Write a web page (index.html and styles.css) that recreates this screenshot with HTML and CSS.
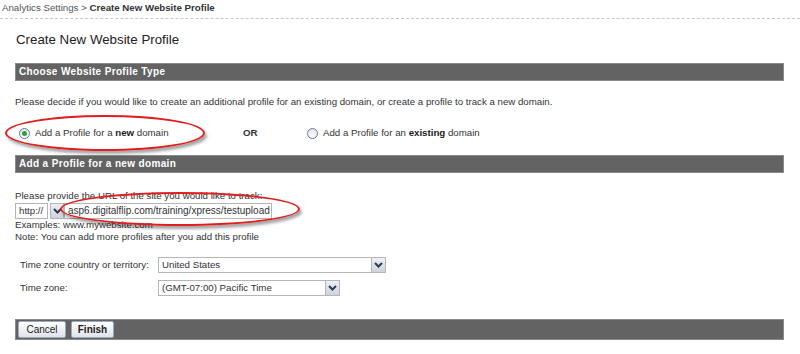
FILE: index.html
```html
<!DOCTYPE html>
<html lang="en">
<head>
    <meta charset="UTF-8">
    <title>Create New Website Profile</title>
    <link rel="stylesheet" href="styles.css">
</head>
<body>
    <div class="breadcrumb">
        Analytics Settings &gt; <b>Create New Website Profile</b>
    </div>

    <div class="page">
        <h1>Create New Website Profile</h1>

        <div class="section-bar">Choose Website Profile Type</div>
        <p class="intro">Please decide if you would like to create an additional profile for an existing domain, or create a profile to track a new domain.</p>

        <div class="choice-row">
            <label class="choice choice-new">
                <span class="radio checked"></span>
                <span>Add a Profile for a <b>new</b> domain</span>
                <span class="mark mark-radio"></span>
            </label>
            <span class="or">OR</span>
            <label class="choice">
                <span class="radio"></span>
                <span>Add a Profile for an <b>existing</b> domain</span>
            </label>
        </div>

        <div class="section-bar">Add a Profile for a new domain</div>

        <div class="url-block">
            <div class="url-label">Please provide the URL of the site you would like to track:</div>
            <div class="url-row">
                <div class="select select-proto">
                    <span class="select-value">http://</span>
                    <span class="select-arrow"><svg width="9" height="6" viewBox="0 0 9 6"><path d="M1 1 L4.5 4.5 L8 1" fill="none" stroke="#2c3a52" stroke-width="2"/></svg></span>
                </div>
                <div class="url-input">asp6.digitalflip.com/training/xpress/testupload</div>
                <span class="mark mark-url"></span>
            </div>
            <div class="hint">Examples: www.mywebsite.com</div>
            <div class="hint">Note: You can add more profiles after you add this profile</div>
        </div>

        <div class="tz-table">
            <div class="tz-label">Time zone country or territory:</div>
            <div class="select select-country">
                <span class="select-value">United States</span>
                <span class="select-arrow"><svg width="9" height="6" viewBox="0 0 9 6"><path d="M1 1 L4.5 4.5 L8 1" fill="none" stroke="#2c3a52" stroke-width="2"/></svg></span>
            </div>
            <div class="tz-label">Time zone:</div>
            <div class="select select-zone">
                <span class="select-value">(GMT-07:00) Pacific Time</span>
                <span class="select-arrow"><svg width="9" height="6" viewBox="0 0 9 6"><path d="M1 1 L4.5 4.5 L8 1" fill="none" stroke="#2c3a52" stroke-width="2"/></svg></span>
            </div>
        </div>

        <div class="button-bar">
            <button class="btn">Cancel</button>
            <button class="btn btn-bold">Finish</button>
        </div>
    </div>
</body>
</html>
```

FILE: styles.css
```css
* {
    margin: 0;
    padding: 0;
    box-sizing: border-box;
}

body {
    font-family: "Liberation Sans", Arial, sans-serif;
    font-size: 9.7px;
    line-height: 12px;
    color: #333;
    background: #fff;
    width: 800px;
    height: 354px;
    overflow: hidden;
}

.breadcrumb {
    padding: 2px 2px 0;
    height: 19px;
    color: #555;
    border-bottom: 1px dashed #c8c8c8;
}

.breadcrumb b {
    color: #333;
}

.page {
    padding: 0 16px 0 15px;
}

h1 {
    font-size: 13.3px;
    font-weight: normal;
    color: #222;
    padding: 15px 0 0 1px;
    height: 44px;
}

.section-bar {
    background: #636363;
    color: #fff;
    font-weight: bold;
    font-size: 10px;
    letter-spacing: 0.35px;
    height: 18px;
    line-height: 16px;
    padding-left: 3px;
    border: 1px solid #8a8a8a;
}

.intro {
    margin-top: 15px;
    color: #333;
}

.choice-row {
    display: flex;
    align-items: center;
    height: 14px;
    margin: 18px 0 15px;
}

.choice {
    display: flex;
    align-items: center;
    gap: 5px;
    color: #333;
    position: relative;
}

.choice b {
    color: #222;
}

.choice-new {
    width: 228px;
    padding-left: 4px;
}

.or {
    font-weight: bold;
    width: 64px;
    color: #333;
}

.radio {
    width: 11px;
    height: 11px;
    border: 1px solid #5d7aa3;
    border-radius: 50%;
    background: linear-gradient(#e6e6e6, #fff);
    display: inline-flex;
    align-items: center;
    justify-content: center;
}

.radio.checked::after {
    content: "";
    width: 5px;
    height: 5px;
    border-radius: 50%;
    background: #2fa12f;
}

/* red hand-drawn annotation ovals */
.mark {
    position: absolute;
    border: 2px solid #e01e1e;
    border-radius: 50%;
    box-shadow: 2px 3px 3px rgba(0, 0, 0, 0.35);
    pointer-events: none;
}

.mark-radio {
    left: -10px;
    top: -12px;
    width: 200px;
    height: 36px;
}

.url-block {
    padding-top: 17px;
}

.url-row {
    display: flex;
    position: relative;
    height: 16px;
    margin-top: 1px;
}

.select {
    display: flex;
    align-items: stretch;
    border: 1px solid #b5b5b5;
    background: #fff;
    height: 16px;
}

.select-value {
    flex: 1;
    padding-left: 3px;
    line-height: 14px;
    color: #333;
}

.select-arrow {
    width: 14px;
    display: flex;
    align-items: center;
    justify-content: center;
    background: linear-gradient(#eef0f5, #cdd2dc);
    border-left: 1px solid #b5b5b5;
}

.select-proto {
    width: 49px;
    border: none;
}

.select-proto .select-value {
    border: 1px solid #b5b5b5;
}

.select-proto .select-arrow {
    margin-left: 2px;
    border: 1px solid #b5b5b5;
}

.url-input {
    width: 208px;
    border: 1px solid #b5b5b5;
    padding-left: 3px;
    line-height: 14px;
    color: #333;
    font-size: 10px;
}

.mark-url {
    left: 45px;
    top: -11px;
    width: 240px;
    height: 34px;
}

.hint {
    color: #333;
}

.tz-table {
    display: grid;
    grid-template-columns: 138px auto;
    row-gap: 7px;
    align-items: center;
    justify-items: start;
    padding-left: 5px;
    margin-top: 14px;
}

.tz-label {
    color: #333;
    white-space: nowrap;
}

.select-country {
    width: 228px;
}

.select-zone {
    width: 182px;
}

.button-bar {
    margin-top: 23px;
    background: #636363;
    border: 1px solid #8a8a8a;
    height: 21px;
    display: flex;
    align-items: center;
    gap: 5px;
    padding-left: 2px;
}

.btn {
    font-family: "Liberation Sans", Arial, sans-serif;
    font-size: 10px;
    color: #222;
    height: 17px;
    width: 48px;
    border: 1px solid #9aa9c2;
    border-radius: 2px;
    background: linear-gradient(#ffffff, #dfe3ea);
}

.btn-bold {
    font-weight: bold;
    width: 43px;
}
```
